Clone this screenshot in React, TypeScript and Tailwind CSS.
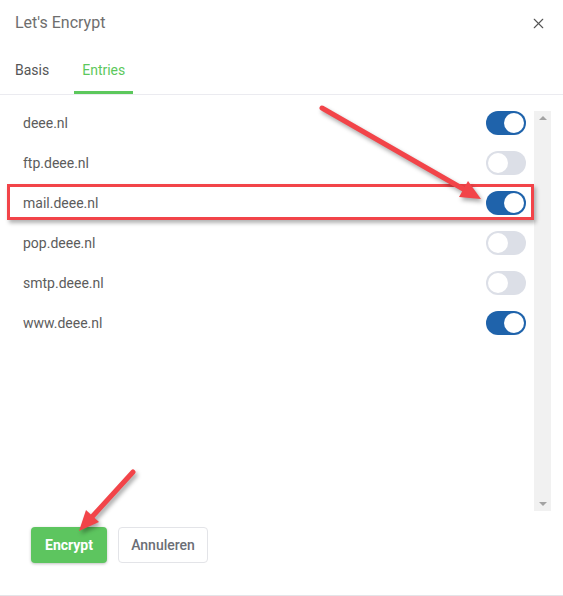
import { X } from 'lucide-react'

const entries = [
  { name: 'deee.nl', on: true },
  { name: 'ftp.deee.nl', on: false },
  { name: 'mail.deee.nl', on: true, highlight: true },
  { name: 'pop.deee.nl', on: false },
  { name: 'smtp.deee.nl', on: false },
  { name: 'www.deee.nl', on: true },
]

function Toggle({ on }: { on: boolean }) {
  return (
    <div
      className={`relative w-[40px] h-[24px] rounded-full ${on ? 'bg-[#1f63ab]' : 'bg-[#dcdfe7]'}`}
    >
      <div
        className={`absolute top-[2px] w-[20px] h-[20px] rounded-full bg-white ${on ? 'left-[18px]' : 'left-[2px]'}`}
      />
    </div>
  )
}

export default function App() {
  return (
    <div className="relative w-[563px] h-[596px] bg-white border-b border-[#e4e4e8] font-['Roboto',sans-serif] overflow-hidden">
      {/* header */}
      <div className="h-[44px] flex items-center justify-between pl-[15px] pr-[16px] pt-[2px]">
        <h1 className="text-[16px] text-[#6e6e6e]">Let's Encrypt</h1>
        <X size={17} strokeWidth={1.6} className="text-[#555]" />
      </div>

      {/* tabs */}
      <div className="h-[51px] flex border-b border-[#ebebf0] pl-[7px] gap-[17px] text-[14px]">
        <div className="h-full flex items-center px-[8px] pt-[2px] text-[#555]">Basis</div>
        <div className="h-full flex items-center px-[8px] pt-[5px] text-[#5cc85c] border-b-[3px] border-[#5cc85c] -mb-px">
          Entries
        </div>
      </div>

      {/* entries list */}
      <div className="mt-[16px] ml-[15px] mr-[12px] h-[400px] flex">
        <div className="flex-1 flex flex-col gap-[16px]">
          {entries.map((e) => (
            <div key={e.name} className="relative h-[24px] flex items-center justify-between pl-[8px] pr-[8px]">
              <span className="text-[14px] text-[#5c5c5c]">{e.name}</span>
              <Toggle on={e.on} />
              {e.highlight && (
                <div className="absolute -left-[8px] -top-[7px] -bottom-[5px] right-0 border-[3px] border-[#f24449] shadow-[2px_3px_4px_rgba(0,0,0,0.3)] pointer-events-none" />
              )}
            </div>
          ))}
        </div>
        <div className="w-[17px] bg-[#f1f1f1] flex flex-col items-center justify-between py-[5px]">
          <div className="w-0 h-0 border-l-[4px] border-r-[4px] border-b-[4px] border-l-transparent border-r-transparent border-b-[#a3a3a3]" />
          <div className="w-0 h-0 border-l-[4px] border-r-[4px] border-t-[4px] border-l-transparent border-r-transparent border-t-[#a3a3a3]" />
        </div>
      </div>

      {/* buttons */}
      <div className="mt-[16px] pl-[31px] flex gap-[11px]">
        <button className="w-[76px] h-[36px] rounded-[4px] bg-[#5dc55f] text-white text-[14px] font-bold shadow-[0_1px_3px_rgba(0,0,0,0.25)]">
          Encrypt
        </button>
        <button className="w-[90px] h-[36px] rounded-[4px] bg-white border border-[#e3e4e8] text-[#6b6e75] text-[14px] font-medium">
          Annuleren
        </button>
      </div>

      {/* annotation arrows */}
      <svg
        className="absolute inset-0 pointer-events-none drop-shadow-[2px_3px_2px_rgba(0,0,0,0.35)]"
        width={563}
        height={596}
      >
        <line x1={322} y1={108} x2={465} y2={190} stroke="#f24449" strokeWidth={5} strokeLinecap="round" />
        <polygon points="481,199 459,197 468,181" fill="#f24449" />
        <line x1={133} y1={472} x2={91} y2={518} stroke="#f24449" strokeWidth={5} strokeLinecap="round" />
        <polygon points="79,531 99,522 86,510" fill="#f24449" />
      </svg>
    </div>
  )
}
